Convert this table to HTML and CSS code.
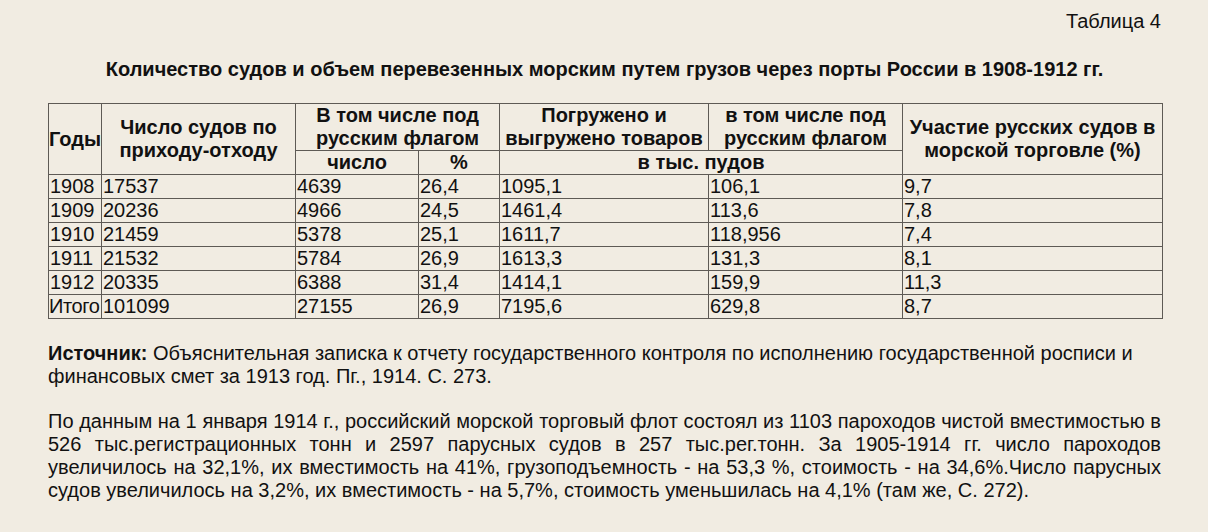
FILE: index.html
```html
<!DOCTYPE html>
<html lang="ru">
<head>
<meta charset="utf-8">
<title>Таблица 4</title>
<link rel="stylesheet" href="styles.css">
</head>
<body>
<div class="page">
  <p class="table-label">Таблица 4</p>
  <h1 class="title">Количество судов и объем перевезенных морским путем грузов через порты России в 1908-1912 гг.</h1>
  <table class="data">
    <colgroup>
      <col class="c1"><col class="c2"><col class="c3"><col class="c4"><col class="c5"><col class="c6"><col class="c7">
    </colgroup>
    <thead>
      <tr class="h1">
        <th rowspan="2">Годы</th>
        <th rowspan="2">Число судов по приходу-отходу</th>
        <th colspan="2">В том числе под русским флагом</th>
        <th>Погружено и выгружено товаров</th>
        <th>в том числе под русским флагом</th>
        <th rowspan="2">Участие русских судов в морской торговле (%)</th>
      </tr>
      <tr class="h2">
        <th>число</th>
        <th>%</th>
        <th colspan="2">в тыс. пудов</th>
      </tr>
    </thead>
    <tbody>
      <tr><td>1908</td><td>17537</td><td>4639</td><td>26,4</td><td>1095,1</td><td>106,1</td><td>9,7</td></tr>
      <tr><td>1909</td><td>20236</td><td>4966</td><td>24,5</td><td>1461,4</td><td>113,6</td><td>7,8</td></tr>
      <tr><td>1910</td><td>21459</td><td>5378</td><td>25,1</td><td>1611,7</td><td>118,956</td><td>7,4</td></tr>
      <tr><td>1911</td><td>21532</td><td>5784</td><td>26,9</td><td>1613,3</td><td>131,3</td><td>8,1</td></tr>
      <tr><td>1912</td><td>20335</td><td>6388</td><td>31,4</td><td>1414,1</td><td>159,9</td><td>11,3</td></tr>
      <tr><td class="total">Итого</td><td>101099</td><td>27155</td><td>26,9</td><td>7195,6</td><td>629,8</td><td>8,7</td></tr>
    </tbody>
  </table>
  <p class="text source"><b>Источник:</b> Объяснительная записка к отчету государственного контроля по исполнению государственной росписи и финансовых смет за 1913 год. Пг., 1914. С. 273.</p>
  <p class="text second">По данным на 1 января 1914 г., российский морской торговый флот состоял из 1103 пароходов чистой вместимостью в 526 тыс.регистрационных тонн и 2597 парусных судов в 257 тыс.рег.тонн. За 1905-1914 гг. число пароходов увеличилось на 32,1%, их вместимость на 41%, грузоподъемность - на 53,3 %, стоимость - на 34,6%.Число парусных судов увеличилось на 3,2%, их вместимость - на 5,7%, стоимость уменьшилась на 4,1% (там же, С. 272).</p>
</div>
</body>
</html>
```

FILE: styles.css
```css
html, body {
  margin: 0;
  padding: 0;
  background: #f1ece2;
}
body {
  font-family: "Liberation Sans", Arial, sans-serif;
  font-size: 20px;
  color: #111;
}
.page {
  width: 1113px;
  padding: 10px 0 0 48px;
}
.table-label {
  margin: 0;
  text-align: right;
  line-height: 23px;
}
.title {
  margin: 25px 0 0;
  font-size: 20px;
  line-height: 23px;
  font-weight: bold;
  text-align: center;
}
.data {
  margin-top: 22px;
  width: 1114px;
  border-collapse: collapse;
  table-layout: fixed;
}
.data th, .data td {
  border: 1px solid #5e5a55;
  padding: 0;
  line-height: 23px;
  font-size: 20px;
}
.data th {
  font-weight: bold;
  text-align: center;
  vertical-align: middle;
}
.data td {
  text-align: left;
  white-space: nowrap;
  padding-left: 1px;
}
.data td.total {
  padding-left: 0;
  letter-spacing: -0.4px;
}
.data tr.h1 th { height: 46px; }
.data tr.h2 th { height: 23px; }
.c1 { width: 53px; }
.c2 { width: 194px; }
.c3 { width: 123px; }
.c4 { width: 81px; }
.c5 { width: 209px; }
.c6 { width: 194px; }
.c7 { width: 260px; }
.text {
  margin: 23px 0 0;
  line-height: 23px;
  text-align: justify;
}
.text.source {
  text-align: left;
}
.text.second {
  margin-top: 22px;
}
```
